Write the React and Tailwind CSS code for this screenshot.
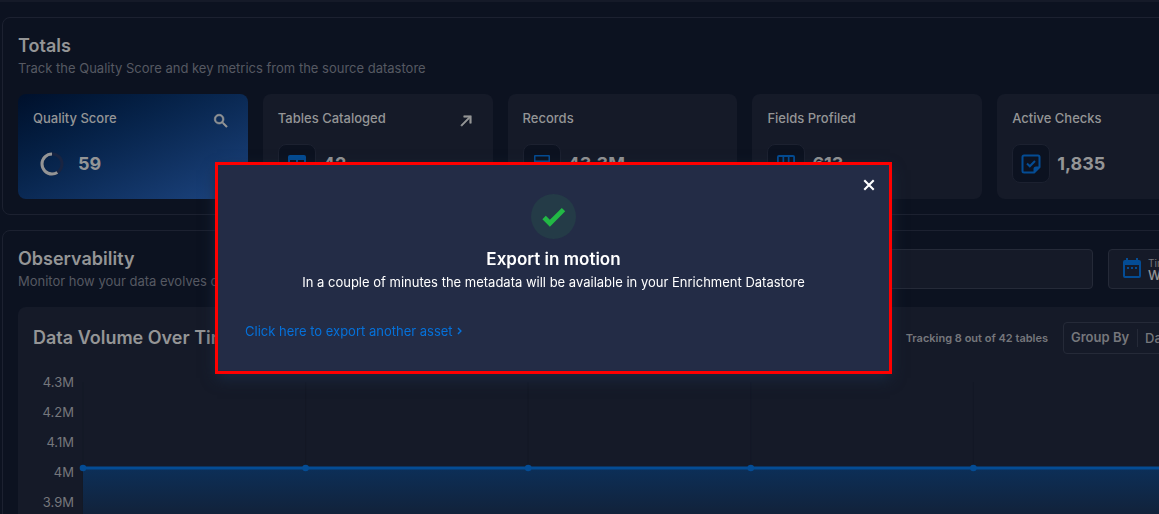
import React from "react";

const cardIcons = {
  table: <path fill="currentColor" fillRule="evenodd" d="M5 3h14a2 2 0 0 1 2 2v13a2 2 0 0 1-2 2H5a2 2 0 0 1-2-2V5a2 2 0 0 1 2-2M5 8v4h6V8H5m8 0v4h6V8h-6m-8 6v4h6v-4H5m8 0v4h6v-4h-6z" />,
  records: <path fill="currentColor" fillRule="evenodd" d="M5 3h14a1 1 0 0 1 1 1v15a1 1 0 0 1-1 1H5a1 1 0 0 1-1-1V4a1 1 0 0 1 1-1zM5.500 4.500v4h13v-4zM5.500 10v8.500h13V10z" />,
  fields: <path fill="currentColor" fillRule="evenodd" d="M5 3h14a2 2 0 0 1 2 2v13a2 2 0 0 1-2 2H5a2 2 0 0 1-2-2V5a2 2 0 0 1 2-2M4.800 5v13h3.700V5zM10.200 5v13h3.600V5zM15.500 5v13h3.700V5z" />,
  checks: (
    <g>
      <path fill="currentColor" fillRule="evenodd" d="M5 2.500h14a2.500 2.500 0 0 1 2.500 2.500v10.500l-6 6H5A2.500 2.500 0 0 1 2.500 19V5A2.500 2.500 0 0 1 5 2.500M5 4.500a.5.5 0 0 0-.5.5v14a.5.5 0 0 0 .5.5h9.500V17a2.500 2.500 0 0 1 2.500-2.500h2.500V5a.5.5 0 0 0-.5-.5z" />
      <path fill="none" stroke="currentColor" strokeWidth="2" d="M8 11.500l2.800 2.800L16 9" />
    </g>
  ),
};

function Glyph({ children, className }) {
  return (
    <svg viewBox="0 0 24 24" className={className} aria-hidden="true">
      {children}
    </svg>
  );
}

function Ring() {
  return (
    <div className="flex h-[39px] w-[38px] items-center justify-center">
      <svg viewBox="0 0 24 24" className="size-6" fill="none" strokeWidth="3" aria-hidden="true">
        <circle cx="12" cy="12" r="10" stroke="#192441" />
        <circle cx="12" cy="12" r="10" stroke="#949596" pathLength="100" strokeDasharray="59 41" transform="matrix(0 -1 -1 0 24 24)" />
      </svg>
    </div>
  );
}

function Card({ title, value, icon, action, primary }) {
  return (
    <article className={primary ? "rounded-lg bg-linear-to-br from-[#00102b] to-[#1d4581] px-[15px] pt-3.5 pb-4" : "rounded-lg bg-[#151a28] px-[15px] pt-3.5 pb-4"}>
      <div className="flex h-5 items-start justify-between">
        <h3 className="text-[13px] leading-5 font-medium text-[#949596]">{title}</h3>
        {action && (
          <button type="button" aria-label={primary ? "Inspect quality score" : "Open tables"} className="mt-1 mr-[3px] text-[#949596]">
            <Glyph className="size-[18px]">
              <path fill="currentColor" stroke="currentColor" strokeWidth="0.8" d={action} />
            </Glyph>
          </button>
        )}
      </div>
      <div className="mt-4 flex items-center gap-[7px]">
        {primary ? (
          <Ring />
        ) : (
          <div className="flex h-[39px] w-[38px] items-center justify-center rounded-lg border border-[#1c2130] bg-[#0c1220] text-[#044c94]">
            <Glyph className="size-6">{cardIcons[icon]}</Glyph>
          </div>
        )}
        <strong className="text-lg leading-6 font-bold text-[#949596]">{value}</strong>
      </div>
    </article>
  );
}

function Heading({ title, text }) {
  return (
    <div className="whitespace-nowrap">
      <h2 className="text-lg leading-6 font-semibold text-[#949596]">{title}</h2>
      <p className="text-[13px] leading-5 text-[#565962]">{text}</p>
    </div>
  );
}

const SEARCH = "M9.500 3A6.500 6.500 0 0 1 16 9.500c0 1.610-.590 3.090-1.560 4.230l.270.270h.790l5 5-1.500 1.500-5-5v-.790l-.270-.270A6.516 6.516 0 0 1 9.500 16a6.500 6.500 0 0 1 0-13m0 2C7 5 5 7 5 9.500S7 14 9.500 14 14 12 14 9.500 12 5 9.500 5z";
const ARROW = "M5 17.590L15.590 7H9V5h10v10h-2V8.410L6.410 19z";
const steps = ["0%", "20%", "40%", "60%", "80%", "100%"];

function Chart() {
  return (
    <div className="mt-[13px] flex">
      <ul className="w-[41px] text-right text-[13px] leading-[30px] text-[#75777c]">
        {["4.3M", "4.2M", "4.1M", "4M", "3.9M", "3.8M"].map((t) => (
          <li key={t}>{t}</li>
        ))}
      </ul>
      <svg className="mt-[15px] mr-4 ml-[9px] h-[170px] min-w-0 flex-1 overflow-visible" role="img" aria-label="Data volume over time">
        <defs>
          <linearGradient id="volume" x1="0" y1="0" x2="0" y2="1">
            <stop offset="0" stopColor="#0c2f58" />
            <stop offset="1" stopColor="#151a28" />
          </linearGradient>
        </defs>
        {steps.map((x) => (
          <line key={x} x1={x} x2={x} y1="0" y2="170" stroke="#131825" />
        ))}
        <rect x="0" y="86" width="100%" height="74" fill="url(#volume)" />
        <line x1="0" x2="100%" y1="86" y2="86" stroke="#044c94" strokeWidth="3" />
        {steps.map((x) => (
          <circle key={x} cx={x} cy="86" r="3.3" fill="#044c94" />
        ))}
      </svg>
    </div>
  );
}

function ExportDialog() {
  return (
    <div className="fixed inset-0 flex items-center justify-center pt-[22px] pr-[52px]">
      <div role="dialog" aria-labelledby="export-title" className="relative w-[677px] border-[3px] border-[#ff0000] bg-[#232c46] px-[27px] pt-[29px] pb-[30px] shadow-[0_6px_14px_-2px_#1b2b43]">
        <button type="button" aria-label="Close" className="absolute top-[11px] right-[11px] text-white">
          <Glyph className="size-[18px]">
            <path fill="none" stroke="currentColor" strokeWidth="2.8" d="M5.700 5.700l12.600 12.600M18.300 5.700L5.700 18.300" />
          </Glyph>
        </button>
        <div className="flex flex-col items-center">
          <div className="flex size-[45px] items-center justify-center rounded-full bg-[#243b47] text-[#22b845]">
            <Glyph className="size-[29px]">
              <path fill="currentColor" d="M9 20.420l-6.210-6.210 2.830-2.830L9 14.770l9.880-9.890 2.830 2.830z" />
            </Glyph>
          </div>
          <h2 id="export-title" className="mt-2 text-[17px] leading-6 font-semibold text-white">Export in motion</h2>
          <p className="text-[13px] leading-[22px] text-white">
            In a couple of minutes the metadata will be available in your Enrichment Datastore
          </p>
        </div>
        <a href="#export" className="mt-7 flex w-fit items-center text-[13px] leading-5 text-[#0571da]">
          Click here to export another asset
          <Glyph className="size-3.5">
            <path fill="none" stroke="currentColor" strokeWidth="2.500" d="M8.500 7l5 5-5 5" />
          </Glyph>
        </a>
      </div>
    </div>
  );
}

export default function App() {
  return (
    <div className="h-screen overflow-hidden bg-[#0c1220] font-['Inter',sans-serif]">
      <div className="h-0.5 bg-[#151a28]" />
      <main className="mt-[15px] -mr-[84px] ml-[2px] flex flex-col gap-[15px]">
        <section className="rounded-lg border border-[#1c2130] px-[15px] pt-4 pb-[15px]">
          <Heading title="Totals" text="Track the Quality Score and key metrics from the source datastore" />
          <div className="mt-4 grid grid-cols-5 gap-[15px]">
            <Card primary title="Quality Score" value="59" action={SEARCH} />
            <Card title="Tables Cataloged" value="42" icon="table" action={ARROW} />
            <Card title="Records" value="43.3M" icon="records" />
            <Card title="Fields Profiled" value="613" icon="fields" />
            <Card title="Active Checks" value="1,835" icon="checks" />
          </div>
        </section>
        <section className="rounded-lg border border-[#1c2130] px-[15px] pt-4 pb-[15px]">
          <div className="flex items-center justify-between gap-[15px]">
            <Heading title="Observability" text="Monitor how your data evolves over time" />
            <div className="flex gap-[15px]">
              <input aria-label="Search" className="h-10 w-[350px] rounded border border-[#252a38] bg-[#151a28] px-3 text-[13px] text-[#949596]" />
              <button type="button" className="flex h-10 w-[119px] items-center gap-1 rounded border border-[#252a38] bg-[#151a28] pl-[11px] text-left text-[#949596]">
                <Glyph className="size-6 text-[#044c94]">
                  <path fill="currentColor" d="M9 10H7v2h2v-2m4 0h-2v2h2v-2m4 0h-2v2h2v-2m2-7h-1V1h-2v2H8V1H6v2H5a2 2 0 0 0-2 2v14a2 2 0 0 0 2 2h14a2 2 0 0 0 2-2V5a2 2 0 0 0-2-2m0 16H5V8h14v11z" />
                </Glyph>
                <span className="flex flex-col">
                  <span className="text-[10px] leading-3 text-[#75777c]">Timeframe</span>
                  <span className="text-[13px] leading-[13px] font-medium">Week</span>
                </span>
              </button>
            </div>
          </div>
          <div className="mt-4 rounded-lg bg-[#151a28] p-[15px]">
            <div className="flex items-center justify-between">
              <h3 className="text-lg leading-6 font-semibold whitespace-nowrap text-[#949596]">Data Volume Over Time</h3>
              <div className="flex items-center gap-[15px]">
                <p className="text-[11px] leading-5 font-semibold text-[#75777c]">Tracking 8 out of 42 tables</p>
                <div className="flex h-8 w-[149px] items-center rounded border border-[#252a38] px-[7px] text-[13px] text-[#75777c]">
                  <label htmlFor="group" className="shrink-0 pr-2 font-semibold">Group By</label>
                  <select id="group" className="h-[18px] min-w-0 flex-1 appearance-none border-l border-[#252a38] pl-[7px] text-[13px] leading-4 font-medium outline-none">
                    <option>Day</option>
                  </select>
                </div>
              </div>
            </div>
            <Chart />
          </div>
        </section>
      </main>
      <ExportDialog />
    </div>
  );
}
